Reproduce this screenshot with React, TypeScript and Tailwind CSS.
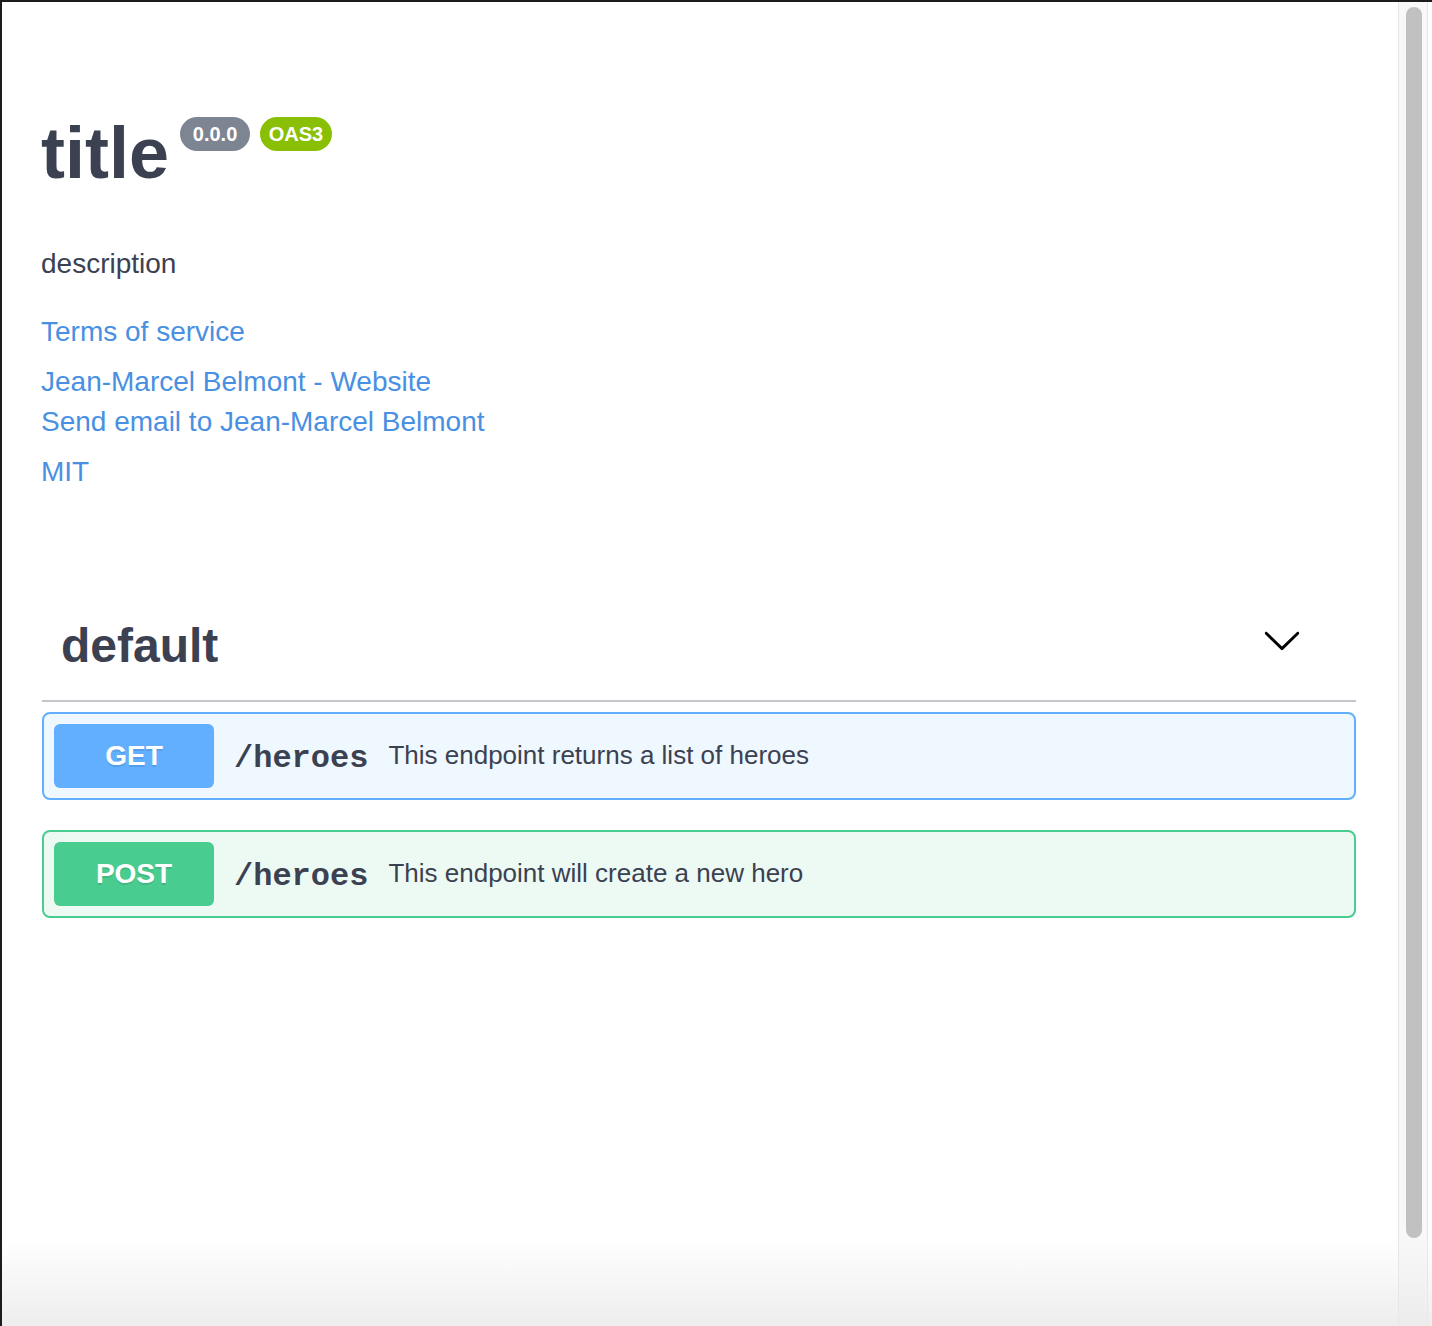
const operations = [
  {
    method: "GET",
    path: "/heroes",
    summary: "This endpoint returns a list of heroes",
    box: "border-[#61affe] bg-[#eff7ff]",
    badge: "bg-[#61affe]",
  },
  {
    method: "POST",
    path: "/heroes",
    summary: "This endpoint will create a new hero",
    box: "border-[#49cc90] bg-[#edfaf4]",
    badge: "bg-[#49cc90]",
  },
];

const Chevron = () => (
  <svg width="40" height="40" viewBox="0 0 20 20" className="-mt-3 shrink-0">
    <path
      fill="#000"
      d="M17.418 6.109c.272-.268.709-.268.979 0s.271.701 0 .969l-7.908 7.83c-.27.268-.707.268-.979 0l-7.908-7.83c-.27-.268-.27-.701 0-.969.271-.268.709-.268.979 0L10 13.25l7.418-7.141z"
    />
  </svg>
);

export default function App() {
  return (
    <div className="relative flex h-[1326px] w-[1432px] overflow-hidden border-l-2 border-t-2 border-[#1c1c1c] bg-white font-['Liberation_Sans',Arial,sans-serif] text-[#3b4151]">
      {/* page */}
      <div className="flex-1 pl-10 pr-[42px] pt-[115px]">
        <div className="flex items-start">
          <h2 className="-ml-px text-[72px] font-bold leading-none">title</h2>
          <span className="ml-[11px] flex h-[34px] w-[70px] items-center justify-center rounded-full bg-[#7d8492] text-[20px] font-bold text-white">
            0.0.0
          </span>
          <span className="ml-[10px] flex h-[34px] w-[72px] items-center justify-center rounded-full bg-[#89bf04] text-[20px] font-bold text-white">
            OAS3
          </span>
        </div>

        <p className="-ml-px mt-[55px] text-[28px] leading-[40px]">description</p>

        <div className="-ml-px text-[28px] leading-[40px] text-[#4990e2]">
          <a className="mt-7 block">Terms of service</a>
          <a className="mt-[10px] block">Jean-Marcel Belmont - Website</a>
          <a className="block">Send email to Jean-Marcel Belmont</a>
          <a className="mt-[10px] block">MIT</a>
        </div>

        <div className="mt-[110px] flex items-center justify-between border-b-2 border-[#c4c6cb] pb-[30px] pl-5 pr-[54px] pt-5">
          <h3 className="-ml-px text-[48px] font-bold leading-none">default</h3>
          <Chevron />
        </div>

        <div className="mt-[10px] flex flex-col gap-[30px]">
          {operations.map((op) => (
            <div
              key={op.method}
              className={`flex items-center rounded-lg border-2 p-[10px] ${op.box}`}
            >
              <span
                className={`flex h-16 w-40 items-center justify-center rounded-md text-[28px] font-bold text-white [text-shadow:0_2px_0_rgba(0,0,0,0.1)] ${op.badge}`}
              >
                {op.method}
              </span>
              <span className="px-5 pt-[6px] font-['Liberation_Mono',monospace] text-[32px] font-bold">
                {op.path}
              </span>
              <span className="-mt-0.5 text-[26px]">{op.summary}</span>
            </div>
          ))}
        </div>
      </div>

      {/* scrollbar */}
      <div className="mr-1 w-[30px] shrink-0 border-x border-[#e6e6e6] bg-[#f8f8f8] pl-[7px] pt-[5px]">
        <div className="h-[1231px] w-4 rounded-full bg-[#c1c1c1]" />
      </div>

      <div className="pointer-events-none absolute bottom-0 left-0 right-0 h-[88px] bg-gradient-to-b from-white/0 to-[#e9e9e9]/80" />
    </div>
  );
}
